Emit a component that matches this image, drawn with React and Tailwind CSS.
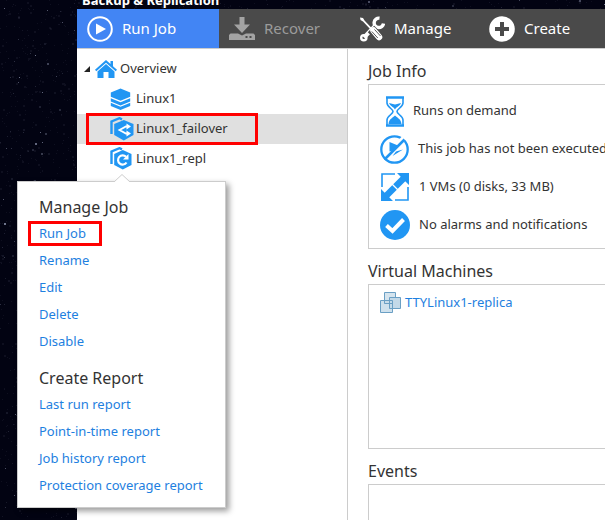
import React from 'react';

const jobLinks = ['Run Job', 'Rename', 'Edit', 'Delete', 'Disable'];

const reportLinks = [
  'Last run report',
  'Point-in-time report',
  'Job history report',
  'Protection coverage report',
];

// Deterministic noise, so the sky does not change between renders
const noise = (n) => {
  const v = Math.sin(n * 12.9898) * 43758.5453;
  return v - Math.floor(v);
};

const stars = Array.from({ length: 9000 }, (_, i) => ({
  x: Math.floor(noise(i + 1) * 640),
  y: Math.floor(noise(i + 17001) * 640),
  size: i % 5 === 0 ? 2 : 1,
  opacity: 0.07 + noise(i + 33001) ** 14 * 0.6,
}));

const App = () => {
  return (
    <div className="relative flex min-h-screen overflow-hidden bg-[#020312] pl-[77px] font-['Noto_Sans',sans-serif] text-[13px] text-[#333333]">
      <Starfield />

      <div className="relative flex min-w-0 flex-1 flex-col">
        <header className="flex h-[9px] items-end overflow-hidden pl-[5px]">
          <h1 className="text-[13px] leading-[18px] font-bold whitespace-nowrap text-white">Backup &amp; Replication</h1>
        </header>

        {/* Toolbar */}
        <nav className="flex h-[39px] shrink-0 bg-[#4a4a4a] text-[15px] text-white">
          <ToolbarButton className="w-[142px] bg-[#4285f4]" icon={<PlayIcon />} label="Run Job" />
          <ToolbarButton className="w-[130px] text-[#9b9b9b]" icon={<RecoverIcon />} label="Recover" disabled />
          <ToolbarButton className="w-[130px]" icon={<ToolsIcon />} label="Manage" />
          <ToolbarButton className="w-[130px]" icon={<PlusIcon />} label="Create" />
        </nav>

        <div className="flex flex-1 border-t border-[#cccccc] bg-white">
          {/* Job tree */}
          <aside className="w-[271px] shrink-0 border-r border-[#cccccc] pt-[5px]">
            <div className="flex h-[30px] items-center pl-[7px]">
              <svg className="h-[6px] w-[6px]" viewBox="0 0 6 6"><path d="M6 0v6H0z" fill="#222" /></svg>
              <HomeIcon />
              <span className="ml-[3px]">Overview</span>
            </div>
            <ul>
              <TreeItem icon={<StackIcon />} label="Linux1" />
              <TreeItem icon={<FailoverIcon />} label="Linux1_failover" selected />
              <TreeItem icon={<ReplicaIcon />} label="Linux1_repl" />
            </ul>
          </aside>

          {/* Job details */}
          <main className="flex min-w-0 flex-1 flex-col overflow-hidden pl-5">
            <SectionTitle>Job Info</SectionTitle>
            <div className="flex h-[165px] flex-col border border-r-0 border-[#cccccc] pt-[7px] pl-[11px]">
              <InfoRow icon={<HourglassIcon />} text="Runs on demand" tight />
              <InfoRow icon={<NotRunIcon />} text="This job has not been executed" />
              <InfoRow icon={<ResizeIcon />} text="1 VMs (0 disks, 33 MB)" />
              <InfoRow icon={<CheckIcon />} text="No alarms and notifications" />
            </div>

            <SectionTitle>Virtual Machines</SectionTitle>
            <div className="h-[165px] border border-r-0 border-[#cccccc] pt-[7px] pl-[11px]">
              <a href="#vm" className="flex items-center gap-1 text-[#1e80e0]">
                <VmIcon />
                TTYLinux1-replica
              </a>
            </div>

            <SectionTitle>Events</SectionTitle>
            <div className="min-h-9 flex-1 border border-r-0 border-b-0 border-[#cccccc]"></div>
          </main>
        </div>
      </div>

      {/* Context menu */}
      <div className="absolute top-[181px] left-[17px] w-[209px] border border-[#cccccc] bg-white pt-3 pb-2 pl-[21px] shadow-[3px_3px_6px_rgba(0,0,0,0.4)]">
        <svg className="absolute -top-2 left-[96px] h-2 w-4" viewBox="0 0 16 8">
          <path d="M0 8L8 0l8 8z" fill="#fff" />
          <path d="M0 8L8 0.5 16 8" fill="none" stroke="#ccc" />
        </svg>
        <MenuGroup title="Manage Job" links={jobLinks} active="Run Job" />
        <div className="h-2.5"></div>
        <MenuGroup title="Create Report" links={reportLinks} />
      </div>
    </div>
  );
};

const ToolbarButton = ({ icon, label, className, disabled }) => (
  <button disabled={disabled} className={`flex shrink-0 items-center gap-[9px] pl-2.5 text-left ${className}`}>
    {icon}
    {label}
  </button>
);

const TreeItem = ({ icon, label, selected }) => (
  <li className={`relative flex h-[30px] items-center pl-[33px] ${selected ? 'bg-[#e0e0e0]' : ''}`}>
    {icon}
    <span className="ml-0.5">{label}</span>
    {selected && <div className="absolute -top-px left-[9px] h-8 w-[172px] border-3 border-[#ff0000]"></div>}
  </li>
);

const SectionTitle = ({ children }) => (
  <h2 className="flex h-[35px] shrink-0 items-center pt-2 text-base whitespace-nowrap">{children}</h2>
);

const InfoRow = ({ icon, text, tight }) => (
  <div className={`flex h-[38px] shrink-0 items-center whitespace-nowrap ${tight ? 'gap-[3px]' : 'gap-[9px]'}`}>
    <div className="flex w-[30px] justify-center">{icon}</div>
    <span>{text}</span>
  </div>
);

const MenuGroup = ({ title, links, active }) => (
  <section>
    <h2 className="flex h-[26px] items-center text-base">{title}</h2>
    <ul>
      {links.map((link) => (
        <li key={link} className="relative flex h-[27px] items-center">
          <a href="#menu" className="text-[#1e80e0]">{link}</a>
          {link === active && <div className="absolute top-px -left-[11px] h-[25px] w-[74px] border-3 border-[#ff0000]"></div>}
        </li>
      ))}
    </ul>
  </section>
);

const Starfield = () => (
  <svg className="absolute inset-0 h-full w-full" aria-hidden="true">
    {stars.map((s, i) => (
      <rect key={i} x={s.x} y={s.y} width={s.size} height={s.size} fill="#b4bcd8" opacity={s.opacity} />
    ))}
  </svg>
);

const PlayIcon = () => (
  <svg className="h-[26px] w-[26px]" viewBox="0 0 26 26" fill="none">
    <circle cx="13" cy="13" r="11.8" stroke="#fff" strokeWidth="2" />
    <path d="M9 7.5v11L19 13z" fill="#fff" />
  </svg>
);

const RecoverIcon = () => (
  <svg className="h-[26px] w-[26px]" viewBox="0 0 26 26">
    <path d="M10.5 1h5v7.500h5.500L13 17 5 8.500h5.500z" fill="#a3a3a3" />
    <path d="M1.500 17.500h7.500l4 2 4-2h7.500L26 19v5H0v-5z" fill="#a3a3a3" />
    <path d="M16.500 20h2v2h-2zM20.500 20h2v2h-2z" fill="#4a4a4a" />
  </svg>
);

const ToolsIcon = () => (
  <svg className="h-[26px] w-[26px]" viewBox="0 0 26 26" fill="none">
    <path d="M5 21.500L17 9" stroke="#fff" strokeWidth="4" />
    <circle cx="4.800" cy="21.700" r="2.600" stroke="#fff" strokeWidth="2.400" />
    <path d="M20.500 2.200a4.700 4.700 0 1 0 4 5.300" stroke="#fff" strokeWidth="3.400" />
    <path d="M12 13l9 9" stroke="#4a4a4a" strokeWidth="9" />
    <path d="M1 1.500l3 .5 1.500 2.500L14.500 14l-1.300 1.300L4 5.500 1.500 4z" fill="#fff" />
    <path d="M14.500 14.500l5.500 6.500" stroke="#fff" strokeWidth="6.500" strokeLinecap="round" />
    <path d="M12.800 15.500l6 6.500M15.500 13.500l6 6.500" stroke="#4a4a4a" strokeWidth="0.900" />
  </svg>
);

const PlusIcon = () => (
  <svg className="h-[26px] w-[26px]" viewBox="0 0 26 26">
    <circle cx="13" cy="13" r="12.800" fill="#fff" />
    <path d="M11 6h4v5h5v4h-5v5h-4v-5H6v-4h5z" fill="#4a4a4a" />
  </svg>
);

const HomeIcon = () => (
  <svg className="ml-[5px] h-[18px] w-[22px]" viewBox="0 0 22 18" fill="#2196f3">
    <path d="M11 0l4.500 4V1H18v5.300l4 3.500-1.300 1.400L11 2.800 1.300 11.200 0 9.800z" />
    <path d="M11 4l8.500 7.500V18h-6v-6h-5v6h-6v-6.500z" />
  </svg>
);

const StackIcon = () => (
  <svg className="h-[22px] w-6" viewBox="0 0 24 22" fill="#2196f3">
    <path d="M10.500 0.500l9.700 4v4.300l-9.700 4-9.700-4V4.500z" />
    <path d="M0.800 10.300l9.700 4 9.700-4v3.200l-9.700 4-9.700-4z" />
    <path d="M0.800 14.800l9.700 4 9.700-4v3.200l-9.700 4-9.700-4z" />
  </svg>
);

const FailoverIcon = () => (
  <svg className="h-6 w-6" viewBox="0 0 24 24" fill="none">
    <path d="M1.500 17V4.500l8-3.300L12 2.300" stroke="#2196f3" strokeWidth="2.400" />
    <path d="M13.800 3l9.700 4v11l-9.700 5.500L4.200 18V7z" fill="#2196f3" />
    <path d="M18 9.500h-2L9.500 13l6.500 3.500h2" stroke="#fff" strokeWidth="1.800" />
    <path d="M16.500 6.500l4.500 3-4.500 3zM16.500 13.500l4.500 3-4.500 3z" fill="#fff" />
  </svg>
);

const ReplicaIcon = () => (
  <svg className="h-6 w-6" viewBox="0 0 24 24" fill="none">
    <path d="M1.500 17V4.500l8-3.300L12 2.300" stroke="#2196f3" strokeWidth="2.400" />
    <path d="M12.800 3l8.700 4v11l-8.700 4.500L4.200 18V7z" fill="#2196f3" />
    <path d="M16 9.800a4.600 4.600 0 1 0 0.500 5.700" stroke="#fff" strokeWidth="2.200" />
    <path d="M18.500 7v5.500H13z" fill="#fff" />
  </svg>
);

const HourglassIcon = () => (
  <svg className="h-[31px] w-5" viewBox="0 0 20 31" fill="none">
    <path d="M1 1.500h18M1 29.500h18" stroke="#2196f3" strokeWidth="2.500" />
    <path d="M2 2v5c0 4 6 6 6 8.500S2 20 2 24v5M18 2v5c0 4-6 6-6 8.500s6 4.500 6 8.500v5" stroke="#2196f3" strokeWidth="1.600" />
    <path d="M4 7l6 1.500L16 7c-1 3-5 4-6 6.500C9 11 5 10 4 7zM10 19.500c2 2.500 6 3 6.500 8.500h-13C4 22.500 8 22 10 19.500z" fill="#2196f3" />
  </svg>
);

const NotRunIcon = () => (
  <svg className="h-[29px] w-[29px]" viewBox="0 0 29 29" fill="none">
    <circle cx="14.500" cy="14.500" r="13.200" stroke="#2196f3" strokeWidth="2.300" />
    <path d="M9.500 7v9.500l3.500-1 5-5zM12.500 21l3.500-4.500 7-2z" fill="#2196f3" />
    <path d="M20.500 6.500l6-6" stroke="#fff" strokeWidth="5" />
    <path d="M4.500 24.500l20-20" stroke="#2196f3" strokeWidth="2.500" />
  </svg>
);

const ResizeIcon = () => (
  <svg className="h-7 w-7" viewBox="0 0 28 28" fill="none">
    <path d="M1 14V1h13M27 14v13H14" stroke="#2196f3" strokeWidth="1.600" />
    <path d="M16 0h12v12zM0 16v12h12z" fill="#2196f3" />
    <path d="M23 5L5 23" stroke="#2196f3" strokeWidth="6.500" />
    <path d="M10 10l8 8" stroke="#fff" strokeWidth="1.300" />
  </svg>
);

const CheckIcon = () => (
  <svg className="h-[30px] w-[30px]" viewBox="0 0 30 30" fill="none">
    <circle cx="15" cy="15" r="15" fill="#2196f3" />
    <path d="M6.500 15.500l6 5.500L23.500 9.500" stroke="#fff" strokeWidth="4" />
  </svg>
);

const VmIcon = () => (
  <svg className="h-[22px] w-[21px]" viewBox="0 0 21 22" stroke="#6a9fc4">
    <path d="M4.500 0.500h11v11h-11z" fill="#d5e4ee" />
    <path d="M9.500 5.500h11v11h-11z" fill="#c3d9e8" />
    <path d="M0.500 8.500h12v12h-12z" fill="#c3d9e8" fillOpacity="0.800" />
    <path d="M9.500 8v8.500h3M4.500 8.500v3h8" fill="none" />
  </svg>
);

export default App;
